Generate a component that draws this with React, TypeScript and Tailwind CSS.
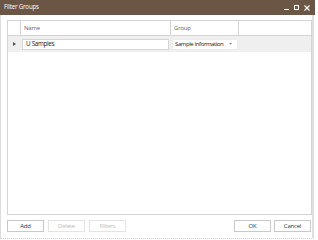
import React from 'react';

const font = { fontFamily: '"Open Sans", "Noto Sans", sans-serif' };

function Btn({ label, disabled }: { label: string; disabled?: boolean }) {
  return (
    <button
      className={
        'h-[12px] w-[37px] border text-[6px] tracking-[-0.2px] leading-none bg-white ' +
        (disabled ? 'border-[#e4e4e4] text-[#b8b8b8]' : 'border-[#c8c8c8] text-[#333]')
      }
    >
      {label}
    </button>
  );
}

export default function App() {
  return (
    <div className="w-[318px] h-[240px] bg-white overflow-hidden" style={font}>
      {/* title bar */}
      <div className="h-[15px] w-[315px] bg-[#6b5646] flex items-center justify-between pl-[4px] pr-[5px]">
        <span className="text-white text-[6.2px] tracking-[-0.2px] leading-none">Filter Groups</span>
        <div className="flex items-center gap-[5px]">
          <div className="w-[5px] h-[1px] bg-white mt-[4px]" />
          <div className="w-[5px] h-[5px] border border-white" />
          <svg width="6" height="6" viewBox="0 0 6 6">
            <path d="M0.5 0.5 L5.5 5.5 M5.5 0.5 L0.5 5.5" stroke="white" strokeWidth="1.2" />
          </svg>
        </div>
      </div>

      <div className="w-[314px] h-[223px] border-l border-r-2 border-[#dedede] flex flex-col">
        {/* grid */}
        <div className="mt-[5px] ml-[6px] w-[305px] h-[195px] border border-[#d4d4d4] flex flex-col">
          <div className="flex h-[15px] border-b border-[#d4d4d4] text-[6px] tracking-[-0.2px] text-[#666]">
            <div className="w-[13px] border-r border-[#d4d4d4]" />
            <div className="w-[150px] border-r border-[#d4d4d4] flex items-center pl-[3px]">Name</div>
            <div className="w-[68px] border-r border-[#d4d4d4] flex items-center pl-[3px]">Group</div>
            <div className="flex-1" />
          </div>
          <div className="flex h-[16px] bg-[#efefef] items-center text-[6.3px] tracking-[-0.3px] text-[#222]">
            <div className="w-[13px] flex items-center justify-center">
              <svg width="3" height="4" viewBox="0 0 3 4">
                <path d="M0 0 L3 2 L0 4 Z" fill="#555" />
              </svg>
            </div>
            <div className="w-[150px] pl-[1px] pr-[2px]">
              <div className="h-[11px] bg-white border border-[#d6d6d6] flex items-center pl-[3px]">U Samples</div>
            </div>
            <div className="w-[68px] pl-[1px]">
              <div className="h-[11px] w-[66px] bg-white border border-[#ececec] flex items-center justify-between pl-[2px] pr-[5px] whitespace-nowrap">
                <span className="text-[6px] tracking-[-0.4px]">Sample Information</span>
                <svg width="3" height="2" viewBox="0 0 4 3">
                  <path d="M0 0 L4 0 L2 2.5 Z" fill="#777" />
                </svg>
              </div>
            </div>
            <div className="flex-1" />
          </div>
          <div className="flex-1 bg-white" />
        </div>

        {/* buttons */}
        <div className="flex justify-between ml-[6px] mr-[1px] mt-[5px]">
          <div className="flex gap-[4px]">
            <Btn label="Add" />
            <Btn label="Delete" disabled />
            <Btn label="Filters" disabled />
          </div>
          <div className="flex gap-[3px]">
            <Btn label="OK" />
            <Btn label="Cancel" />
          </div>
        </div>
      </div>
      <div className="w-[314px] border-b border-dotted border-[#cfcfcf]" />
    </div>
  );
}
